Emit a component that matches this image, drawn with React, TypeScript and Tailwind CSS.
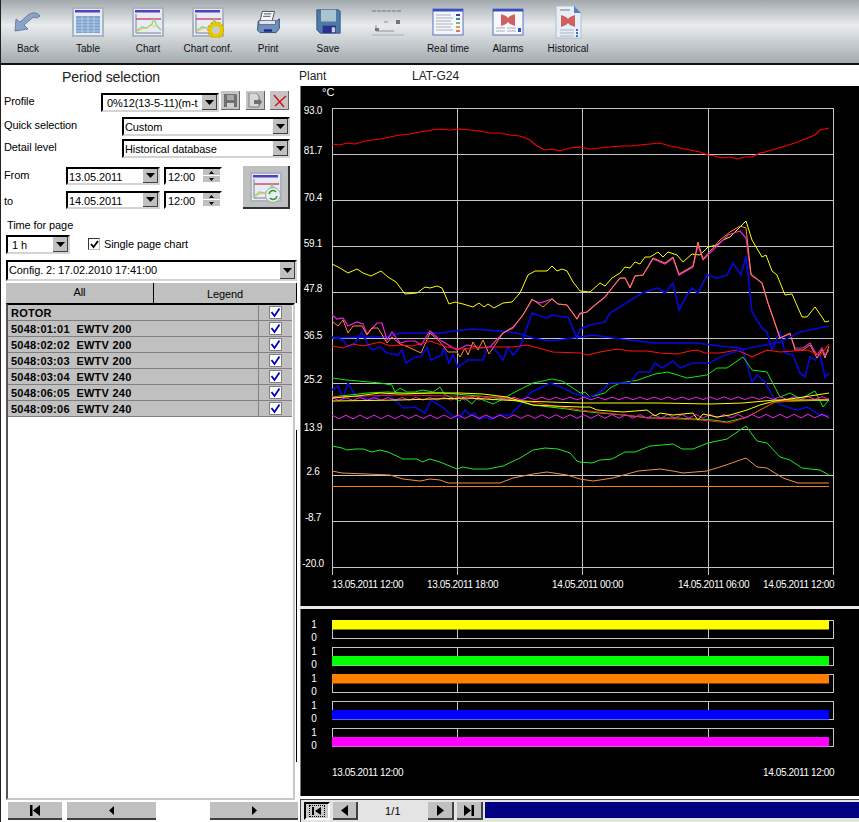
import React from "react";

const gridY = [108, 154, 200, 246, 292, 338, 383, 429, 475, 521, 567];
const gridX = [332.5, 457.5, 582.5, 708.5, 833.5];
const yLabels = ["93.0", "81.7", "70.4", "59.1", "47.8", "36.5", "25.2", "13.9", "2.6", "-8.7", "-20.0"];
const labelY = [114, 154, 201, 247, 292, 339, 383, 431, 475, 521, 567];
const xLabels: [number, string][] = [
  [332, "13.05.2011 12:00"],
  [427, "13.05.2011 18:00"],
  [552, "14.05.2011 00:00"],
  [678, "14.05.2011 06:00"],
  [763, "14.05.2011 12:00"],
];

// small zigzag used for the two magenta traces
function wave(x0: number, x1: number, y0: number, y1: number, amp: number) {
  const out: string[] = [];
  let i = 0;
  for (let x = x0; x <= x1; x += 7) {
    const t = (x - x0) / (x1 - x0);
    out.push(`${x},${(y0 + (y1 - y0) * t + (i % 2 ? amp : -amp)).toFixed(1)}`);
    i++;
  }
  return out.join(" ");
}

const series: { c: string; w: number; p: string }[] = [
  { c: "#ff0000", w: 1.1, p: "332,144 340,145 347,143 355,144 365,141 380,139 390,137 400,135 410,134 420,132 432,130 440,129 450,130 460,129 470,130 480,131 490,133 500,133 510,135 520,136 530,140 537,146 545,150 552,149 560,151 570,148 580,147 590,149 600,148 610,147 620,146 630,146 640,145 650,144 660,143 670,146 680,148 690,150 700,152 708,155 715,156 722,158 730,157 737,159 745,157 752,157 760,153 765,152 775,149 785,146 795,143 805,139 815,135 820,130 825,129 829,128" },
  { c: "#ffff00", w: 1, p: "332,264 340,268 348,273 357,269 363,273 371,276 381,271 388,277 396,282 405,294 417,293 425,287 430,288 437,286 442,288 449,304 455,302 463,304 473,307 479,303 484,307 488,304 494,308 503,303 512,302 520,293 528,275 535,271 547,271 552,266 557,271 562,269 567,271 573,282 580,291 590,292 600,283 605,286 612,278 620,273 625,267 630,268 635,262 640,264 645,257 650,257 658,252 663,257 668,252 677,255 683,262 692,254 700,255 708,247 717,245 723,240 730,237 737,230 746,221 752,240 762,257 766,255 772,271 777,275 785,295 792,294 802,317 807,317 815,307 822,317 825,322 829,321" },
  { c: "#0808e8", w: 1.4, p: "332,338 367,337 387,337 400,333 427,333 442,333 453,331 473,329 500,331 517,333 533,338 550,341 580,337 593,335 613,338 653,343 697,343 720,346 740,348 743,350 752,382 757,375 765,382 773,397 780,405 797,410 807,407 820,415 829,416" },
  { c: "#0808d0", w: 1.7, p: "332,337 343,340 348,347 355,343 362,332 367,343 372,350 380,347 387,353 398,355 402,350 406,363 415,357 421,357 427,347 431,360 442,355 444,348 449,363 453,355 458,367 468,360 483,360 488,347 493,347 503,360 508,347 513,355 520,347 532,313 547,318 552,315 563,317 568,317 577,338 580,329 590,325 605,322 610,313 623,305 642,293 658,288 665,293 673,283 679,310 687,295 692,288 698,293 707,275 717,278 727,275 733,263 741,275 746,256 752,312 762,328 767,332 772,350 780,332 785,353 793,355 800,373 805,377 810,357 815,360 820,355 825,377 829,373" },
  { c: "#ee22dd", w: 1.2, p: "332,315 337,319 343,318 348,326 357,322 363,324 367,334 377,323 382,323 387,340 392,332 400,343 407,341 415,341 421,345 430,331 440,340 457,350 467,345 473,346 480,348 490,347 503,333 513,328 523,315 532,300 540,303 552,299 558,304 567,305 577,319 580,313 587,312 595,305 605,297 612,288 620,278 625,278 630,287 635,276 643,275 653,259 665,264 673,258 679,275 693,267 698,245 703,260 720,243 728,235 740,231 746,238 751,275 762,283 768,303 780,338 790,334 795,348 803,348 810,343 817,355 822,348 825,355 829,350" },
  { c: "#ff8830", w: 1, p: "332,321 338,326 343,320 348,333 353,326 362,326 367,335 372,328 378,328 387,343 392,337 400,344 408,347 421,353 430,333 440,342 448,352 457,352 460,357 465,348 468,355 473,342 478,350 483,340 489,354 497,342 503,333 513,327 523,315 532,299 543,307 552,299 558,304 567,305 577,319 580,314 587,312 595,305 605,297 612,288 620,278 625,278 630,288 635,276 643,275 653,258 665,263 673,257 679,274 693,266 698,242 703,259 720,240 730,232 740,226 746,228 751,274 762,283 768,303 780,338 790,333 795,350 803,350 810,345 817,358 822,350 825,358 829,346" },
  { c: "#ff1010", w: 1.1, p: "332,346 343,348 353,344 363,346 380,342 390,346 400,345 413,346 430,341 447,347 460,349 487,347 513,347 527,345 553,352 580,353 587,355 600,352 617,349 630,351 647,351 660,353 677,354 690,351 697,350 705,353 720,353 737,350 752,357 767,350 780,352 807,350 820,355 829,344" },
  { c: "#10e810", w: 1, p: "332,378 347,380 358,381 380,383 392,385 395,392 400,388 407,392 415,392 422,390 433,392 440,387 445,395 460,401 463,397 472,404 478,397 483,400 493,404 503,399 513,393 523,388 533,383 538,382 552,379 562,381 573,388 580,393 585,392 590,397 605,393 610,388 620,383 638,380 655,374 668,372 687,378 707,375 717,368 727,368 743,357 752,370 767,372 780,397 790,393 797,397 802,398 815,391 823,407 829,400" },
  { c: "#0808d0", w: 1.6, p: "332,390 338,386 343,398 348,383 355,395 372,400 380,395 390,395 403,408 415,407 425,413 431,400 442,407 453,416 460,418 465,410 470,415 475,413 478,419 487,417 490,419 500,415 510,415 520,405 530,393 540,388 550,383 563,388 573,393 580,395 590,397 600,392 610,383 620,383 630,383 638,372 650,372 655,363 662,368 673,361 680,368 693,363 710,363 720,357 740,350 750,348 780,342 800,332 829,326" },
  { c: "#18f018", w: 1, p: "332,397 367,393 387,392 407,393 443,393 467,395 490,397 513,400 533,405 567,409 580,411 600,413 623,415 650,418 677,418 713,420 727,422 747,417 775,402 797,401 829,400" },
  { c: "#ff1818", w: 1, p: "332,397 400,395 500,397 580,410 650,418 700,420 730,423 747,417 775,402 829,399" },
  { c: "#f020f0", w: 1, p: wave(332, 829, 399, 398, 1.3) },
  { c: "#f020f0", w: 1, p: wave(332, 829, 417, 416, 1.8) },
  { c: "#ffff00", w: 1, p: "332,398 357,396 380,393 400,394 433,393 460,393 483,394 507,397 520,401 533,405 553,406 580,407 590,407 597,410 623,412 647,410 655,416 660,413 673,415 693,413 698,420 703,414 717,417 730,415 747,410 760,405 775,401 797,398 829,393" },
  { c: "#ffff00", w: 1, p: "332,401 400,400 467,398 520,401 580,403 637,403 660,403 710,404 743,403 775,400 829,400" },
  { c: "#20e820", w: 1, p: "332,446 342,448 347,450 355,449 363,449 372,452 380,450 388,452 403,459 417,459 422,462 430,459 440,462 457,469 463,467 473,469 488,469 503,466 520,458 533,450 545,448 558,449 570,453 577,461 580,462 592,463 600,460 612,459 625,452 635,452 650,446 673,444 682,449 693,449 708,443 727,439 746,426 757,441 767,443 780,457 790,460 802,468 820,470 829,475" },
  { c: "#f09040", w: 1, p: "332,471 342,473 367,474 390,475 403,479 420,481 430,479 440,480 448,483 500,483 513,478 533,474 547,472 567,475 580,479 593,481 613,478 638,471 660,469 673,471 683,473 707,471 723,466 746,458 757,467 767,468 783,478 798,483 829,483" },
  { c: "#f08020", w: 1, p: "332,486.5 829,486.5" },
];

const lanes: { top: number; line: number; fill: string; barY: number }[] = [
  { top: 620, line: 638, fill: "#ffff00", barY: 620 },
  { top: 647, line: 665, fill: "#00ff00", barY: 656 },
  { top: 674, line: 692, fill: "#ff8000", barY: 674 },
  { top: 701, line: 719, fill: "#0000ff", barY: 710 },
  { top: 728, line: 746, fill: "#ff00ff", barY: 737 },
];

const rows = ["5048:01:01  EWTV 200", "5048:02:02  EWTV 200", "5048:03:03  EWTV 200", "5048:03:04  EWTV 240", "5048:06:05  EWTV 240", "5048:09:06  EWTV 240"];

function Caret() {
  return (
    <svg width="9" height="5" viewBox="0 0 9 5">
      <path d="M0 0h9L4.5 5z" fill="#000" />
    </svg>
  );
}

function Select({ text, className, pad = "pl-[1px]" }: { text: string; className: string; pad?: string }) {
  return (
    <div className={`flex bg-white border-2 border-t-black border-l-black border-r-[#d4d4d4] border-b-[#d4d4d4] ${className}`}>
      <div className={`flex-1 overflow-hidden whitespace-nowrap text-[11px] leading-[17px] ${pad}`}>{text}</div>
      <div className="w-[15px] flex items-center justify-center bg-[#c0c0c0] border-r border-b border-[#404040]">
        <Caret />
      </div>
    </div>
  );
}

function TimeBox({ text }: { text: string }) {
  return (
    <div className="ml-[4px] w-[58px] h-[18px] flex bg-white border-2 border-t-black border-l-black border-r-white border-b-white">
      <div className="flex-1 pl-[2px] text-[11px] leading-[16px]">{text}</div>
      <div className="w-[17px] flex flex-col gap-[1px]">
        <div className="h-[6px] bg-[#c0c0c0] flex items-center justify-center">
          <svg width="5" height="3"><path d="M0 3h5L2.5 0z" fill="#000" /></svg>
        </div>
        <div className="h-[6px] bg-[#c0c0c0] flex items-center justify-center">
          <svg width="5" height="3"><path d="M0 0h5L2.5 3z" fill="#000" /></svg>
        </div>
      </div>
    </div>
  );
}

function MiniChart({ gear, refresh }: { gear?: boolean; refresh?: boolean }) {
  return (
    <svg width="32" height="32" viewBox="0 0 32 32">
      <rect x="1" y="2" width="30" height="28" fill="#e6ecf4" stroke="#a9b6c2" strokeWidth="2" />
      <rect x="3" y="4" width="25" height="2.5" fill="#5c3db8" />
      <path d="M4 13h25" stroke="#d02050" strokeWidth="1.2" />
      <path d="M4 8v19h25" fill="none" stroke="#667" strokeWidth="0.8" />
      <path d="M4 25l6-4 5 1 5-4 2-5 3 7 4 4" fill="none" stroke="#8cd070" strokeWidth="1.2" />
      <path d="M4 26l6-3 5-1 5-3 4 2" fill="none" stroke="#e8c860" strokeWidth="1" />
      {gear && (
        <g>
          <circle cx="24" cy="24" r="6" fill="#c8ccc8" stroke="#e8c800" strokeWidth="4" />
          <circle cx="24" cy="24" r="8" fill="none" stroke="#c8a800" strokeWidth="1.5" strokeDasharray="2 2" />
        </g>
      )}
      {refresh && (
        <g>
          <circle cx="23" cy="24" r="7.5" fill="#e8eef0" stroke="#a0a8a8" />
          <path d="M19 23a4 4 0 0 1 7-2M27 25a4 4 0 0 1-7 2" fill="none" stroke="#2a9a2a" strokeWidth="1.6" />
        </g>
      )}
    </svg>
  );
}

function Bowtie({ x, y }: { x: number; y: number }) {
  return <path transform={`translate(${x} ${y})`} d="M0 0l5 2 2 2 2-2 5-2v12l-5-2-2-2-2 2-5 2z" fill="#d06060" />;
}

function TableIcon() {
  return (
    <svg width="32" height="32" viewBox="0 0 32 32">
      <rect x="1" y="2" width="30" height="28" fill="#e6ecf4" stroke="#a9b6c2" strokeWidth="2" />
      <rect x="3" y="4" width="25" height="2.5" fill="#5c3db8" />
      <rect x="4" y="10" width="24" height="17" fill="#7da2cc" />
      <path d="M4 13h24M4 16h24M4 19h24M4 22h24M4 25h24M10 10v17M16 10v17M22 10v17" stroke="#c8d8ea" strokeWidth="0.7" />
    </svg>
  );
}

const icons: { label: string; icon: React.ReactNode }[] = [
  {
    label: "Back",
    icon: (
      <svg width="28" height="24" viewBox="0 0 28 24">
        <path d="M1 21l1-12 4 3 8-7c4-3 9-3 12 1l-3 2c-2-1-4-1-6 1l-7 6 4 4z" fill="#8ba3c6" stroke="#5a6d8e" strokeWidth="0.8" />
      </svg>
    ),
  },
  { label: "Table", icon: <TableIcon /> },
  { label: "Chart", icon: <MiniChart /> },
  { label: "Chart conf.", icon: <MiniChart gear /> },
  {
    label: "Print",
    icon: (
      <svg width="26" height="26" viewBox="0 0 32 32">
        <path d="M9 3h15l-3 12H6z" fill="#f4f6f8" stroke="#334" />
        <path d="M11 6h9M10 9h9" stroke="#334" />
        <path d="M4 15h22l4-3v12l-4 5H6l-3-3z" fill="#6f8fc0" stroke="#2a3a60" />
        <rect x="5" y="14" width="20" height="5" fill="#dde4ee" stroke="#334" strokeWidth="0.6" />
        <rect x="11" y="25" width="10" height="3" fill="#1f2a80" />
      </svg>
    ),
  },
  {
    label: "Save",
    icon: (
      <svg width="25" height="25" viewBox="0 0 30 30">
        <path d="M1 1h26l2 2v26H5l-4-4z" fill="#4f7aa8" stroke="#2b4a78" />
        <rect x="6" y="1" width="18" height="14" fill="#a8c4d0" />
        <rect x="8" y="20" width="16" height="9" fill="#2e2e90" />
        <rect x="19" y="22" width="4" height="6" fill="#c8d4dc" />
      </svg>
    ),
  },
  {
    label: "",
    icon: (
      <svg width="34" height="28" viewBox="0 0 34 28">
        <path d="M1 3h30" stroke="#70787c" strokeWidth="1" strokeDasharray="4 1" />
        <path d="M1 27h32" stroke="#a8b0b4" strokeWidth="1" />
        <path d="M13 14h4M5 17v6h18" stroke="#8a9296" strokeWidth="1" fill="none" />
        <rect x="4" y="20" width="4" height="3" fill="#70787c" />
        <rect x="25" y="12" width="4" height="4" fill="#70787c" />
      </svg>
    ),
  },
  {
    label: "Real time",
    icon: (
      <svg width="32" height="28" viewBox="0 0 32 28">
        <rect x="1" y="1" width="30" height="26" fill="#f4f6fa" stroke="#5a70c8" strokeWidth="1" />
        <rect x="1" y="1" width="30" height="2.5" fill="#3a50b8" />
        <path d="M4 7h15M4 10h17M4 13h15M4 16h17M4 19h15M4 22h17" stroke="#a8b0bc" />
        <path d="M24 7h4" stroke="#2a40b0" strokeWidth="2" />
        <path d="M24 11h4" stroke="#5070c0" strokeWidth="2" />
        <path d="M24 15h4" stroke="#70c060" strokeWidth="2" />
        <path d="M24 19h4" stroke="#e0a040" strokeWidth="2" />
        <path d="M24 23h4" stroke="#e07060" strokeWidth="2" />
      </svg>
    ),
  },
  {
    label: "Alarms",
    icon: (
      <svg width="32" height="28" viewBox="0 0 32 28">
        <rect x="1" y="1" width="30" height="26" fill="#f6f8fc" stroke="#5a70c8" strokeWidth="1" />
        <rect x="1" y="1" width="30" height="2.5" fill="#3a50b8" />
        <Bowtie x={9} y={6} />
        <path d="M4 20h9M15 20h9M4 23h9M15 23h9" stroke="#a8b0bc" />
        <rect x="26" y="20" width="3" height="4" fill="#3050c0" />
      </svg>
    ),
  },
  {
    label: "Historical",
    icon: (
      <svg width="32" height="34" viewBox="0 0 32 34">
        <path d="M4 1h18l7 7v25H4z" fill="#e8eef6" stroke="#b0bccc" />
        <path d="M22 1v7h7z" fill="#5080d0" />
        <path d="M8 5h10" stroke="#778" />
        <Bowtie x={9} y={10} />
        <path d="M8 25h14M8 28h14M8 31h14" stroke="#a8b4c4" />
        <path d="M25 24v8" stroke="#4070c8" strokeWidth="2" strokeDasharray="2 1" />
      </svg>
    ),
  },
];

function NavGlyph({ kind }: { kind: "first" | "prev" | "next" | "last" | "smallPrev" | "smallNext" }) {
  if (kind === "smallPrev") return <svg width="5" height="9"><path d="M5 0v9L0 4.5z" fill="#000" /></svg>;
  if (kind === "smallNext") return <svg width="5" height="9"><path d="M0 0v9l5-4.5z" fill="#000" /></svg>;
  if (kind === "prev") return <svg width="7" height="11"><path d="M7 0v11L0 5.5z" fill="#000" /></svg>;
  if (kind === "next") return <svg width="7" height="11"><path d="M0 0v11l7-5.5z" fill="#000" /></svg>;
  if (kind === "first") return <svg width="10" height="11"><path d="M0 0h2.5v11H0zM10 0v11L3 5.5z" fill="#000" /></svg>;
  return <svg width="10" height="11"><path d="M0 0v11l7-5.5zM7.5 0H10v11H7.5z" fill="#000" /></svg>;
}

function DarkButton({ children, className }: { children: React.ReactNode; className: string }) {
  return (
    <div className={`h-[18px] flex items-center justify-center bg-[#c0c0c0] border-b-2 border-[#404040] ${className}`}>{children}</div>
  );
}

function Check() {
  return (
    <div className="mt-[1px] w-[13px] h-[13px] flex items-center justify-center bg-white border border-[#808080]">
      <svg width="11" height="11" viewBox="0 0 11 11">
        <path d="M1.5 5l3 4L9.5 1.5" fill="none" stroke="#0000c0" strokeWidth="1.8" />
      </svg>
    </div>
  );
}

export default function App() {
  return (
    <div className="w-[859px] h-[822px] overflow-hidden bg-white text-black font-['Liberation_Sans',sans-serif]">
      {/* top toolbar */}
      <div className="h-[65px] flex border-b-2 border-b-[#111] border-l border-l-[#222] bg-gradient-to-b from-[#a2a9ad] via-[#e9ecee] via-40% to-[#a3abaf]">
        <div className="flex -ml-[3px]">
          {icons.map((it, i) => (
            <div key={i} className="w-[60px] flex flex-col items-center pt-[5px]">
              <div className="h-[33px] flex items-center justify-center">{it.icon}</div>
              <div className="mt-[4px] h-[14px] text-[10px] leading-[14px] text-[#111] whitespace-nowrap">{it.label}</div>
            </div>
          ))}
        </div>
      </div>

      <div className="relative flex h-[757px]">
        {/* left panel */}
        <div className="w-[300px] shrink-0 flex flex-col border-l border-l-[#222] text-[11px] tracking-[-0.1px]">
          <div className="h-[25px] pl-[61px] text-[14px] leading-[25px] text-[#222]">Period selection</div>

          <div className="h-[23px] flex">
            <div className="w-[100px] pl-[3px] leading-[22px]">Profile</div>
            <Select text="0%12(13-5-11)(m-t" pad="pl-[4px]" className="mt-[3px] w-[118px] h-[19px]" />
            <div className="mt-[1px] ml-[2px] w-[19px] h-[19px] flex items-center justify-center bg-[#c4c4c4] border-r border-b border-[#666]">
              <svg width="13" height="13" viewBox="0 0 13 13">
                <path d="M0 0h12l1 1v12H0z" fill="#707070" />
                <rect x="3" y="1" width="7" height="5" fill="#a8a8a8" />
                <rect x="3" y="9" width="7" height="4" fill="#d0d0d0" />
              </svg>
            </div>
            <div className="mt-[1px] ml-[6px] w-[19px] h-[19px] flex items-center justify-center bg-[#c4c4c4] border-r border-b border-[#666]">
              <svg width="14" height="15" viewBox="0 0 14 15">
                <path d="M1 0h7l3 3v11H1z" fill="#d8d8d8" stroke="#808080" />
                <path d="M6 7h5v-2l3 4-3 4v-2H6z" fill="#707070" />
              </svg>
            </div>
            <div className="mt-[1px] ml-[5px] w-[19px] h-[19px] flex items-center justify-center bg-[#c4c4c4] border-r border-b border-[#666]">
              <svg width="15" height="15" viewBox="0 0 15 15">
                <path d="M2 2l10 12M14 3L3 13" stroke="#d01818" strokeWidth="1.5" />
              </svg>
            </div>
          </div>

          <div className="h-[25px] flex">
            <div className="w-[121px] pl-[3px] leading-[24px]">Quick selection</div>
            <Select text="Custom" className="mt-[4px] w-[168px] h-[19px]" />
          </div>
          <div className="h-[21px] flex">
            <div className="w-[121px] pl-[3px] leading-[18px]">Detail level</div>
            <Select text="Historical database" className="mt-[1px] w-[168px] h-[19px]" />
          </div>

          <div className="h-[50px] flex">
            <div className="pt-[8px] w-[221px]">
              <div className="h-[24px] flex">
                <div className="w-[65px] pl-[3px] leading-[16px]">From</div>
                <Select text="13.05.2011" className="w-[94px] h-[18px]" />
                <TimeBox text="12:00" />
              </div>
              <div className="h-[18px] flex">
                <div className="w-[65px] pl-[3px] leading-[20px]">to</div>
                <Select text="14.05.2011" className="w-[94px] h-[18px]" />
                <TimeBox text="12:00" />
              </div>
            </div>
            <div className="mt-[7px] ml-[21px] w-[47px] h-[43px] flex items-center justify-center bg-[#c0c0c0] border-r-2 border-b-2 border-[#333]">
              <MiniChart refresh />
            </div>
          </div>

          <div className="mt-[7px] h-[19px] pl-[6px] leading-[18px]">Time for page</div>
          <div className="h-[19px] flex">
            <Select text="1 h" pad="pl-[4px]" className="ml-[5px] w-[64px] h-[19px]" />
            <div className="ml-[18px] mt-[3px] w-[12px] h-[12px] flex items-center justify-center bg-white border border-t-[#333] border-l-[#333] border-r-[#bbb] border-b-[#bbb]">
              <svg width="9" height="9" viewBox="0 0 9 9">
                <path d="M1 4l2.5 3L8 1" fill="none" stroke="#000" strokeWidth="1.8" />
              </svg>
            </div>
            <div className="ml-[4px] leading-[18px]">Single page chart</div>
          </div>

          <Select text="Config. 2: 17.02.2010 17:41:00" className="mt-[6px] ml-[5px] w-[291px] h-[21px] shrink-0" />

          <div className="mt-[2px] ml-[5px] h-[20px] flex shrink-0">
            <div className="w-[148px] bg-[#c0c0c0] border-r border-r-black text-center leading-[18px]">All</div>
            <div className="w-[143px] bg-[#c0c0c0] border-r border-r-black text-center leading-[22px]">Legend</div>
          </div>

          <div className="ml-[5px] w-[289px] flex-1 border-t-2 border-t-black border-l-2 border-l-[#555] border-r-2 border-r-[#c8c8c8] border-b-2 border-b-[#c8c8c8] pr-[1px]">
            <div className="h-[16px] flex bg-[#c0c0c0] border-b border-[#808080] font-bold leading-[17px]">
              <div className="flex-1 pl-[3px] tracking-[0.25px]">ROTOR</div>
              <div className="w-[34px] border-l border-[#808080] pl-[10px]">
                <Check />
              </div>
            </div>
            {rows.map((r) => (
              <div key={r} className="h-[16px] flex bg-[#c0c0c0] border-b border-[#808080] font-bold leading-[17px]">
                <div className="flex-1 pl-[3px] whitespace-pre tracking-[0.25px]">{r}</div>
                <div className="w-[34px] border-l border-[#808080] pl-[10px]">
                  <Check />
                </div>
              </div>
            ))}
          </div>

          <div className="h-[22px] shrink-0 flex items-start pt-[2px]">
            <DarkButton className="ml-[7px] w-[54px]"><NavGlyph kind="first" /></DarkButton>
            <DarkButton className="ml-[5px] w-[89px]"><NavGlyph kind="smallPrev" /></DarkButton>
            <DarkButton className="ml-[54px] w-[88px]"><NavGlyph kind="smallNext" /></DarkButton>
          </div>

          <div className="absolute left-[296px] top-[365px] h-[332px] w-[1px] bg-black" />
        </div>

        {/* right column */}
        <div className="flex-1 flex flex-col">
          <div className="h-[21px] flex text-[12px] leading-[23px] text-[#222]">
            <div className="-ml-[1px] w-[113px]">Plant</div>
            <div>LAT-G24</div>
          </div>

          <svg className="block shrink-0 bg-black border-l border-[#777]" width="559" height="520" viewBox="301 86 558 520">
            {gridY.map((y) => (
              <line key={y} x1="332" x2="834" y1={y + 0.5} y2={y + 0.5} stroke="#c4c4c4" />
            ))}
            {gridX.map((x) => (
              <line key={x} x1={x} x2={x} y1="108" y2="575" stroke="#c4c4c4" />
            ))}
            {series.map((s, i) => (
              <polyline key={i} points={s.p} fill="none" stroke={s.c} strokeWidth={s.w} />
            ))}
            <text x="322" y="96" className="fill-white text-[11px]">°C</text>
            {yLabels.map((t, i) => (
              <text key={t} x="313" y={labelY[i]} textAnchor="middle" className="fill-white text-[10px] tracking-[-0.3px]">{t}</text>
            ))}
            {xLabels.map(([x, t]) => (
              <text key={x} x={x} y="587.5" className="fill-white text-[10px] tracking-[-0.37px]">{t}</text>
            ))}
          </svg>

          <div className="h-[3px] shrink-0 bg-[#e8e8e8]" />

          <svg className="block shrink-0 bg-black border-l border-[#777]" width="559" height="187" viewBox="301 609 558 187">
            {lanes.map((l) => (
              <g key={l.top}>
                <rect x="332.5" y={l.top + 0.5} width="501" height={l.line - l.top} fill="none" stroke="#c4c4c4" />
                <line x1="457.5" x2="457.5" y1={l.top} y2={l.line} stroke="#c4c4c4" />
                <line x1="708.5" x2="708.5" y1={l.top} y2={l.line} stroke="#c4c4c4" />
                <rect x="332" y={l.barY} width="497" height="9.5" fill={l.fill} />
                <text x="314" y={l.top + 8} textAnchor="middle" className="fill-white text-[10px]">1</text>
                <text x="314" y={l.top + 21} textAnchor="middle" className="fill-white text-[10px]">0</text>
              </g>
            ))}
            <text x="332" y="775.5" className="fill-white text-[10px] tracking-[-0.37px]">13.05.2011 12:00</text>
            <text x="763" y="775.5" className="fill-white text-[10px] tracking-[-0.37px]">14.05.2011 12:00</text>
          </svg>

          <div className="h-[4px] shrink-0 bg-white border-b border-[#444]" />

          <div className="h-[22px] shrink-0 flex items-start pt-[2px] bg-[#e4e4e4] border-l border-[#444] text-[11px]">
            <div className="ml-[3px] w-[26px] h-[18px] flex items-center justify-center bg-[#c8c8c8] border-2 border-t-black border-l-black border-r-white border-b-white">
              <div className="border border-dotted border-black px-[2px] h-[12px] flex items-center">
                <svg width="10" height="8"><path d="M0 0h2v8H0zM9 0v8L3 4z" fill="#000" /></svg>
              </div>
            </div>
            <DarkButton className="ml-[3px] w-[25px] border-r-2"><NavGlyph kind="prev" /></DarkButton>
            <div className="w-[70px] text-center leading-[18px] tracking-[0.2px]">1/1</div>
            <DarkButton className="w-[26px] border-r-2"><NavGlyph kind="next" /></DarkButton>
            <DarkButton className="ml-[3px] w-[26px] border-r-2"><NavGlyph kind="last" /></DarkButton>
            <div className="ml-[2px] flex-1 h-[16px] bg-[#000080]" />
          </div>
        </div>
      </div>
    </div>
  );
}
